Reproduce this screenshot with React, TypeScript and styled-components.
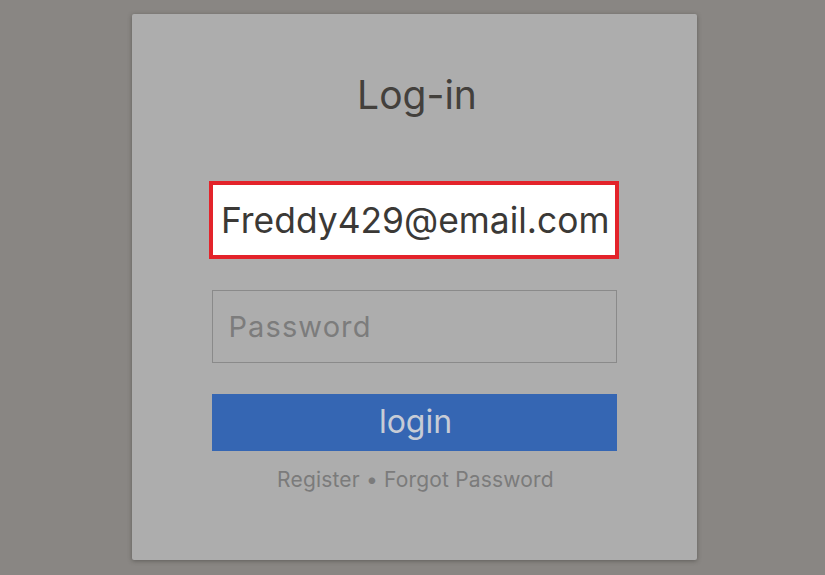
import React from "react";
import styled, { createGlobalStyle } from "styled-components";

const Global = createGlobalStyle`
  html, body { margin: 0; padding: 0; }
  body {
    background: #898683;
    font-family: "Inter", "Roboto", "Liberation Sans", sans-serif;
    width: 825px;
    height: 575px;
    overflow: hidden;
  }
`;

const Page = styled.div`
  width: 825px;
  height: 575px;
  display: flex;
  justify-content: center;
  padding-top: 14px;
  padding-left: 3px;
  box-sizing: border-box;
`;

const Card = styled.div`
  width: 565px;
  height: 546px;
  box-sizing: border-box;
  background: #adadad;
  border-radius: 2px;
  box-shadow: 0 1px 4px rgba(60, 58, 55, 0.55);
  display: flex;
  flex-direction: column;
  align-items: center;
  padding-top: 57px;
`;

const Title = styled.h1`
  margin: 0 0 62px;
  padding-left: 6px;
  font-size: 39px;
  line-height: 48px;
  font-weight: 400;
  color: #43403c;
`;

const Field = styled.div<{ $focused?: boolean }>`
  box-sizing: border-box;
  display: flex;
  align-items: center;
  width: ${(p) => (p.$focused ? "410px" : "405px")};
  height: ${(p) => (p.$focused ? "78px" : "73px")};
  margin-bottom: 31px;
  padding-left: ${(p) => (p.$focused ? "8px" : "16px")};
  border: ${(p) => (p.$focused ? "4px solid #e3232a" : "1px solid #8a8a8a")};
  background: ${(p) => (p.$focused ? "#ffffff" : "transparent")};
  font-size: ${(p) => (p.$focused ? "35.4px" : "29px")};
  letter-spacing: ${(p) => (p.$focused ? "0" : "1.1px")};
  color: ${(p) => (p.$focused ? "#3b3936" : "#7c7c7c")};
  white-space: nowrap;
`;

const Button = styled.div`
  width: 405px;
  height: 57px;
  background: #3566b3;
  color: #c7ccd6;
  font-size: 32px;
  display: flex;
  align-items: center;
  justify-content: center;
  padding: 0 0 2px 3px;
  box-sizing: border-box;
`;

const Links = styled.div`
  margin-top: 16px;
  padding-left: 3px;
  font-size: 21px;
  letter-spacing: 0.18px;
  color: #7b7b7b;
`;

export default function App() {
  return (
    <>
      <Global />
      <Page>
        <Card>
          <Title>Log-in</Title>
          <Field $focused>Freddy429@email.com</Field>
          <Field>Password</Field>
          <Button>login</Button>
          <Links>Register • Forgot Password</Links>
        </Card>
      </Page>
    </>
  );
}
